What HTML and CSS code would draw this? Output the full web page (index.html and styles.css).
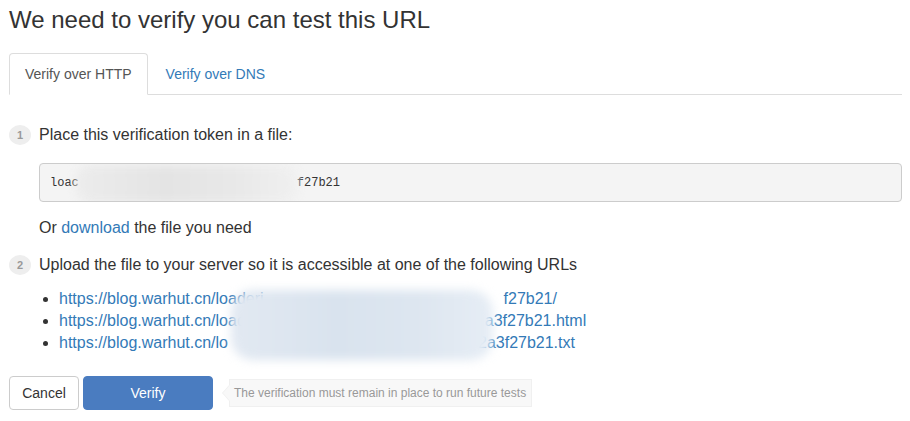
FILE: index.html
```html
<!DOCTYPE html>
<html>
<head>
<meta charset="utf-8">
<link rel="stylesheet" href="styles.css">
</head>
<body>
<div class="page">
  <h1 class="title">We need to verify you can test this URL</h1>
  <ul class="tabs">
    <li class="tab active">Verify over HTTP</li>
    <li class="tab"><a href="#">Verify over DNS</a></li>
  </ul>
  <div class="step">
    <span class="badge">1</span>
    <span class="step-text">Place this verification token in a file:</span>
  </div>
  <div class="indent">
    <div class="token">
      <code>loac</code><code class="tail">f27b21</code>
      <div class="smudge token-smudge"></div>
    </div>
    <p class="or">Or <a href="#">download</a> the file you need</p>
  </div>
  <div class="step step2">
    <span class="badge">2</span>
    <span class="step-text">Upload the file to your server so it is accessible at one of the following URLs</span>
  </div>
  <div class="urls">
    <ul class="url-list">
      <li><a href="#">https://blog.warhut.cn/loaderi<span class="gap g1"></span>f27b21/</a></li>
      <li><a href="#">https://blog.warhut.cn/load<span class="gap g2"></span>a3f27b21.html</a></li>
      <li><a href="#">https://blog.warhut.cn/lo<span class="gap g3"></span>2a3f27b21.txt</a></li>
    </ul>
    <div class="smudge url-smudge"></div>
  </div>
  <div class="actions">
    <button class="btn btn-default">Cancel</button>
    <button class="btn btn-primary">Verify</button>
    <span class="hint">The verification must remain in place to run future tests</span>
  </div>
</div>
</body>
</html>
```
FILE: styles.css
```css
* { box-sizing: border-box; }
html, body { margin: 0; padding: 0; background: #fff; }
body {
  font-family: "Liberation Sans", Arial, sans-serif;
  color: #333;
  font-size: 14px;
}
a { color: #337ab7; text-decoration: none; }
.page { padding: 0 8px 0 9px; }
.title {
  margin: 0;
  padding-top: 5px;
  font-size: 24px;
  font-weight: normal;
  line-height: 30px;
  height: 53px;
}
.tabs {
  list-style: none;
  margin: 0;
  padding: 0;
  display: flex;
  border-bottom: 1px solid #ddd;
  height: 42px;
}
.tab {
  padding: 0 15px;
  line-height: 41px;
  font-size: 14px;
  margin-right: 2px;
  border: 1px solid transparent;
  border-radius: 4px 4px 0 0;
}
.tab.active {
  color: #555;
  border-color: #ddd;
  border-bottom-color: #fff;
  background: #fff;
  height: 42px;
}
.step {
  display: flex;
  align-items: center;
  margin-top: 29px;
  height: 22px;
}
.step2 { margin-top: 15px; }
.badge {
  width: 22px;
  height: 20px;
  border-radius: 50%;
  background: #eee;
  color: #999;
  font-size: 11px;
  font-weight: bold;
  display: flex;
  align-items: center;
  justify-content: center;
  margin-right: 8px;
}
.step-text { font-size: 16px; }
.indent { padding-left: 30px; }
.token {
  position: relative;
  margin-top: 17px;
  height: 39px;
  background: #f4f4f4;
  border: 1px solid #ccc;
  border-radius: 4px;
  display: flex;
  align-items: center;
  padding-left: 10px;
  font-family: "Liberation Mono", "DejaVu Sans Mono", monospace;
  font-size: 12px;
  overflow: hidden;
}
.token code { font-family: inherit; color: #333; }
.token .tail { margin-left: 218px; }
.smudge { position: absolute; filter: blur(5px); border-radius: 14px; }
.token-smudge {
  left: 36px; top: 1px; width: 222px; height: 38px;
  background: linear-gradient(90deg, #ececec, #e4e4e4 40%, #e8e8e8 70%, #f0f0f0);
}
.or {
  margin: 15px 0 0;
  font-size: 16px;
  line-height: 22px;
}
.urls { position: relative; margin-top: 12px; }
.url-list {
  margin: 0;
  padding-left: 50px;
  font-size: 16px;
  line-height: 22px;
}
.gap { display: inline-block; }
.g1 { width: 240px; }
.g2 { width: 239px; }
.g3 { width: 250px; }
.url-smudge {
  left: 222px; top: 2px; width: 262px; height: 70px;
  background: linear-gradient(90deg, #e2e9f2, #d9e3ee 40%, #dde6f0 70%, #e6edf5);
  border-radius: 22px;
}
.actions {
  margin-top: 22px;
  display: flex;
  align-items: center;
}
.btn {
  font-family: inherit;
  font-size: 14px;
  height: 34px;
  border-radius: 4px;
  padding: 0 12px;
  border: 1px solid #ccc;
  cursor: pointer;
}
.btn-default { background: #fff; color: #333; width: 70px; }
.btn-primary {
  background: #4a7cc0;
  border-color: #4a7cc0;
  color: #fff;
  width: 130px;
  margin-left: 4px;
}
.hint {
  position: relative;
  margin-left: 16px;
  background: #f8f8f8;
  border: 1px solid #f0f0f0;
  color: #999;
  font-size: 12px;
  line-height: 26px;
  padding: 0 5px 0 4px;
}
.hint::before {
  content: "";
  position: absolute;
  left: -8px;
  top: 4px;
  width: 0; height: 0;
  border-top: 9px solid transparent;
  border-bottom: 9px solid transparent;
  border-right: 8px solid #f0f0f0;
}
.hint::after {
  content: "";
  position: absolute;
  left: -7px;
  top: 5px;
  width: 0; height: 0;
  border-top: 8px solid transparent;
  border-bottom: 8px solid transparent;
  border-right: 7px solid #f8f8f8;
}
```
